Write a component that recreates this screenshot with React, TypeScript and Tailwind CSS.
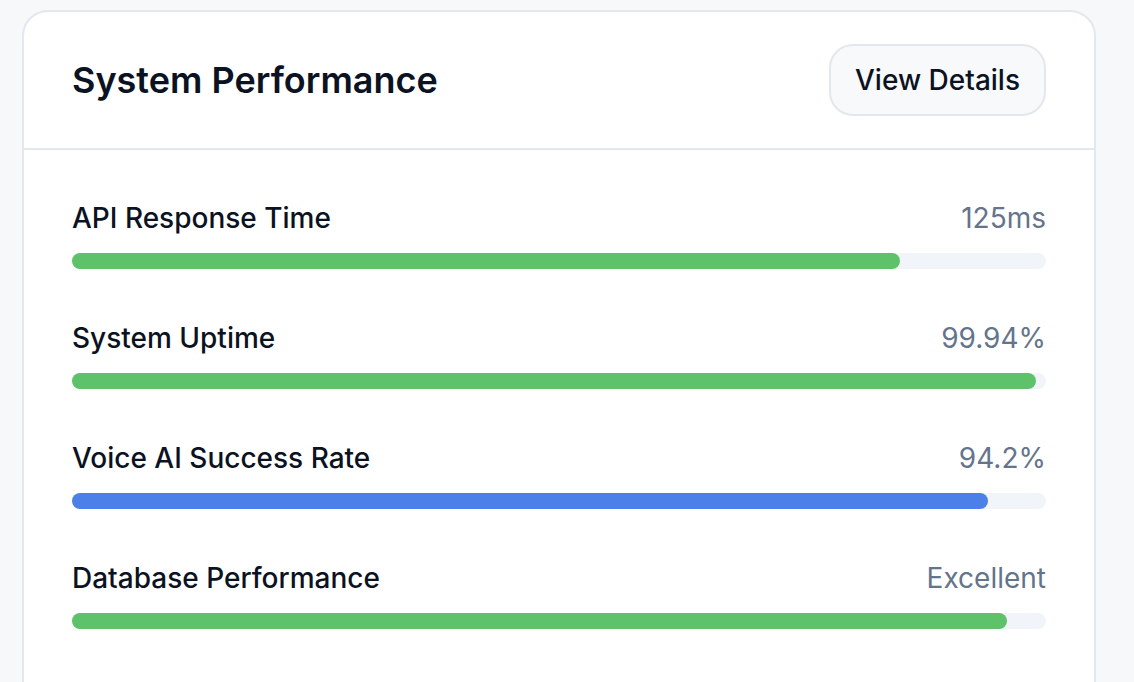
import React from 'react';

type Metric = {
    label: string;
    value: string;
    pct: number;
    color: string;
};

const metrics: Metric[] = [
    { label: 'API Response Time', value: '125ms', pct: 85, color: 'bg-[#5ec26a]' },
    { label: 'System Uptime', value: '99.94%', pct: 99, color: 'bg-[#5ec26a]' },
    { label: 'Voice AI Success Rate', value: '94.2%', pct: 94, color: 'bg-[#4b80e8]' },
    { label: 'Database Performance', value: 'Excellent', pct: 96, color: 'bg-[#5ec26a]' },
];

export default function App() {
    return (
        <div
            className="h-[682px] overflow-hidden bg-[#f7f8fa] pl-[22px] pt-[10px]"
            style={{ fontFamily: 'Inter, "Noto Sans", sans-serif' }}
        >
            <div className="w-[1074px] h-[760px] rounded-[26px] border-2 border-[#e3e7ee] bg-white">
                <div className="flex items-center justify-between px-[48px] py-[32px] border-b-2 border-[#e3e7ee]">
                    <h2 className="text-[36px] font-semibold text-[#0b1222]">
                        System Performance
                    </h2>
                    <button className="h-[72px] w-[217px] rounded-[24px] border-2 border-[#e3e7ee] bg-[#f8f9fb] text-[28px] font-medium text-[#0b1222]">
                        View Details
                    </button>
                </div>
                <div className="flex flex-col gap-[48px] px-[48px] pt-[47px]">
                    {metrics.map((m) => (
                        <div key={m.label}>
                            <div className="flex items-center justify-between leading-[42px]">
                                <span className="text-[28px] font-medium text-[#0b1222]">{m.label}</span>
                                <span className="text-[28px] text-[#64748b]">{m.value}</span>
                            </div>
                            <div className="mt-[14px] h-[16px] rounded-full bg-[#f1f4f9]">
                                <div
                                    className={`h-full rounded-full ${m.color}`}
                                    style={{ width: `${m.pct}%` }}
                                />
                            </div>
                        </div>
                    ))}
                </div>
            </div>
        </div>
    );
}
